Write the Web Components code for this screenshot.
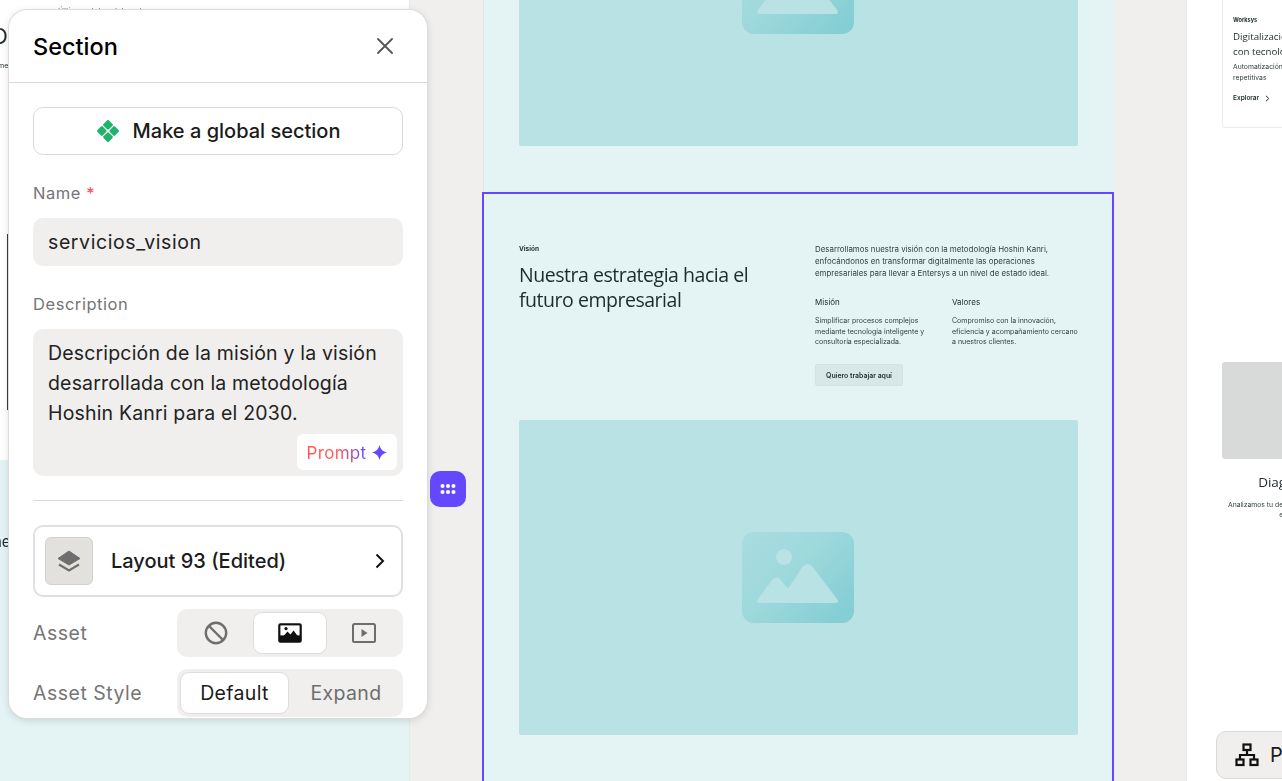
<!DOCTYPE html>
<html lang="es">
<head>
<meta charset="utf-8">
<title>Section</title>
<style>
  html, body { margin: 0; height: 100%; overflow: hidden; background: #f0efed; }
  body { font-family: "Inter", "Liberation Sans", sans-serif; }
</style>
</head>
<body>
<editor-app></editor-app>

<script>
const FONT = `"Inter", "Liberation Sans", sans-serif`;

class ImagePlaceholder extends HTMLElement {
  constructor() {
    super();
    this.attachShadow({ mode: 'open' });
    this.shadowRoot.innerHTML = `
      <style>
        :host { display: flex; flex: none; width: 559px; height: 315px; align-items: center; justify-content: center; background: #b8e2e4; border-radius: 2px; }
        svg { display: block; width: 112px; height: 91px; margin-left: -1px; }
      </style>
      <svg viewBox="0 0 112 91" aria-hidden="true">
        <defs>
          <linearGradient id="g" x1="0" y1="0" x2="1" y2="0.8">
            <stop offset="0" stop-color="#aadcdf"/>
            <stop offset="0.45" stop-color="#9fd9dc"/>
            <stop offset="1" stop-color="#84ced4"/>
          </linearGradient>
        </defs>
        <rect width="112" height="91" rx="12" fill="url(#g)"/>
        <circle cx="42" cy="25" r="8" fill="#b8e2e4"/>
        <path d="M17 69 L32 49 Q34 46 37 49 L44 57 Q46 59 48 57 L62 36 Q66 32 69 36 L94 69 Z" fill="#b8e2e4" stroke="#b8e2e4" stroke-width="4" stroke-linejoin="round"/>
      </svg>
    `;
  }
}

class VisionSection extends HTMLElement {
  constructor() {
    super();
    this.attachShadow({ mode: 'open' });
    this.shadowRoot.innerHTML = `
      <style>
        :host { display: block; box-sizing: border-box; width: 632px; margin: -1px 0 0 -2px; height: 600px; border: 2px solid #6347ff; background: #e4f3f4; padding: 47px 35px 0; color: #1d2b2c; font-family: "Inter", sans-serif; position: relative; }
        .top { display: grid; grid-template-columns: 296px 1fr; height: 179px; filter: blur(0.25px); }
        .tag { font-size: 6.5px; font-weight: 700; line-height: 10px; margin: 3px 0 0; }
        h2 { margin: 8px 0 0; font: 400 19.5px/25px "Open Sans", sans-serif; letter-spacing: -0.47px; }
        .lead { margin: 2px 0 0; font-size: 7.9px; line-height: 12px; color: #334041; white-space: nowrap; }
        .cols { display: grid; grid-template-columns: 137px 1fr; margin-top: 17px; }
        h3 { margin: 0 0 8px; font-size: 8px; line-height: 12px; font-weight: 400; }
        .cols p { margin: 0; font-size: 7px; line-height: 10.6px; color: #334041; white-space: nowrap; }
        button { display: block; margin-top: 16.5px; width: 88px; height: 22px; padding: 0; border: 1px solid #d3e2e3; border-radius: 2px; background: #d8e7e8; font: 600 6.9px "Inter", sans-serif; color: #1d2b2c; }
      </style>
      <div class="top">
        <div>
          <p class="tag">Visión</p>
          <h2>Nuestra estrategia hacia el<br>futuro empresarial</h2>
        </div>
        <div>
          <p class="lead">Desarrollamos nuestra visión con la metodología Hoshin Kanri,<br>enfocándonos en transformar digitalmente las operaciones<br>empresariales para llevar a Entersys a un nivel de estado ideal.</p>
          <div class="cols">
            <div><h3>Misión</h3><p>Simplificar procesos complejos<br>mediante tecnología inteligente y<br>consultoría especializada.</p></div>
            <div><h3>Valores</h3><p>Compromiso con la innovación,<br>eficiencia y acompañamiento cercano<br>a nuestros clientes.</p></div>
          </div>
          <button>Quiero trabajar aquí</button>
        </div>
      </div>
      <image-placeholder></image-placeholder>
    `;
  }
}

class CenterPage extends HTMLElement {
  constructor() {
    super();
    this.attachShadow({ mode: 'open' });
    this.shadowRoot.innerHTML = `
      <style>
        :host { display: block; flex: none; width: 630px; height: 781px; box-shadow: -1px 0 0 #e6e6e4; }
        .prev { box-sizing: border-box; height: 193px; padding: 0 36px 47px 35px; background: #e4f3f4; display: flex; flex-direction: column; justify-content: flex-end; overflow: hidden; }
      </style>
      <div class="prev"><image-placeholder></image-placeholder></div>
      <vision-section></vision-section>
    `;
  }
}

class LeftPage extends HTMLElement {
  constructor() {
    super();
    this.attachShadow({ mode: 'open' });
    this.shadowRoot.innerHTML = `
      <style>
        :host { display: block; position: relative; flex: none; width: 409px; height: 781px; background: #fff; overflow: hidden; box-shadow: 1px 0 0 #e8e8e6; font-family: "Inter", sans-serif; color: #1d2b2c; }
        .mint { height: 321px; margin-top: 460px; background: #e4f3f4; }
        .bit { position: absolute; white-space: nowrap; filter: blur(0.25px); }
        .rule { position: absolute; left: 7px; top: 234px; width: 1px; height: 176px; background: #33403f; }
      </style>
      <div class="mint"></div>
      <span class="bit" style="left:-8px;top:23px;font-size:22px">D</span>
      <span class="bit" style="left:-8px;top:61px;font-size:7px">Inme</span>
      <span class="bit" style="left:58px;top:6px;font-size:8px;color:#666">Últimos datos del sector</span>
      <div class="rule"></div>
      <span class="bit" style="left:-12px;top:532px;font-size:15px">the</span>
    `;
  }
}

class RightPage extends HTMLElement {
  constructor() {
    super();
    this.attachShadow({ mode: 'open' });
    this.shadowRoot.innerHTML = `
      <style>
        :host { display: block; flex: none; box-sizing: border-box; width: 300px; height: 781px; background: #fff; padding-left: 35px; color: #1d2b2c; font-family: "Inter", sans-serif; box-shadow: -1px 0 0 #e8e8e6; }
        .card { box-sizing: border-box; width: 200px; height: 128px; padding-left: 10px; padding-top: 15px; border: 1px solid #eceded; border-top: 0; border-radius: 0 0 3px 3px; filter: blur(0.25px); }
        .tag { margin: 0; font-size: 5.6px; font-weight: 700; line-height: 10px; }
        .title { margin: 5px 0 0; font: 400 9.7px/14.5px "Open Sans", sans-serif; white-space: nowrap; }
        .desc { margin: 3px 0 0; font-size: 6.8px; line-height: 10.5px; white-space: nowrap; color: #334041; }
        .link { margin: 10px 0 0; font-size: 6.5px; font-weight: 600; line-height: 10px; display: flex; align-items: center; gap: 6px; }
        .step { width: 146px; margin-top: 234px; text-align: center; filter: blur(0.25px); }
        .ph { height: 97px; background: #d8d9d9; border-radius: 3px; }
        .name { margin: 14px 0 0; font: 400 13.5px/18px "Open Sans", sans-serif; }
        .text { margin: 9px 0 0; font-size: 6.8px; line-height: 10px; white-space: nowrap; color: #334041; }
      </style>
      <div class="card">
        <p class="tag">Worksys</p>
        <p class="title">Digitalización<br>con tecnología</p>
        <p class="desc">Automatización de tareas<br>repetitivas</p>
        <p class="link">Explorar <svg width="5" height="7" viewBox="0 0 5 7"><path d="M1 .8 3.8 3.5 1 6.2" fill="none" stroke="#1d2b2c" stroke-width="1"/></svg></p>
      </div>
      <div class="step">
        <div class="ph"></div>
        <p class="name">Diagnóstico</p>
        <p class="text">Analizamos tu desempeño y tus procesos<br>en detalle</p>
      </div>
    `;
  }
}

class PanelField extends HTMLElement {
  constructor() {
    super();
    this.attachShadow({ mode: 'open' });
    const required = this.hasAttribute('required') ? '<i>*</i>' : '';
    this.shadowRoot.innerHTML = `
      <style>
        :host { display: block; font-family: ${FONT}; }
        label { display: block; height: 35px; font-size: 16.5px; line-height: 20px; color: #757575; letter-spacing: .55px; }
        i { font-style: normal; color: #f4515c; }
        .box { position: relative; box-sizing: border-box; background: #f0efed; border-radius: 10px; padding: 9px 15px; font-size: 19.5px; line-height: 30px; color: #222; min-height: 48px; letter-spacing: var(--field-spacing, .17px); }
      </style>
      <label>${this.getAttribute('label')} ${required}</label>
      <div class="box"><slot></slot></div>
    `;
  }
}

class SegmentRow extends HTMLElement {
  constructor() {
    super();
    this.attachShadow({ mode: 'open' });
    this.shadowRoot.innerHTML = `
      <style>
        :host { display: flex; align-items: center; justify-content: space-between; height: 48px; font-family: ${FONT}; }
        span { font-size: 19.5px; color: #757575; letter-spacing: .5px; }
        .track { box-sizing: border-box; width: 226px; height: 48px; padding: 3px; display: flex; background: #f0efed; border-radius: 10px; }
      </style>
      <span>${this.getAttribute('label')}</span>
      <div class="track"><slot></slot></div>
    `;
  }
}

class SegmentItem extends HTMLElement {
  constructor() {
    super();
    this.attachShadow({ mode: 'open' });
    this.shadowRoot.innerHTML = `
      <style>
        :host { display: flex; box-sizing: border-box; flex: 1 1 0; align-items: center; justify-content: center; border-radius: 9px; border: 1px solid transparent; font-family: ${FONT}; font-size: 19.5px; letter-spacing: .35px; color: #6e6e6e; }
        :host([active]) { background: #fff; border-color: #dedddb; color: #1b1b1b; }
      </style>
      <slot></slot>
    `;
  }
}

class SectionPanel extends HTMLElement {
  constructor() {
    super();
    this.attachShadow({ mode: 'open' });
    this.shadowRoot.innerHTML = `
      <style>
        :host { position: absolute; left: 9px; top: 10px; box-sizing: border-box; width: 418px; height: 708px; overflow: hidden; background: #fff; border-radius: 18px; box-shadow: 0 0 0 1px #dcdcda, 0 2px 8px rgba(0,0,0,.14); font-family: ${FONT}; color: #1b1b1b; }
        header { box-sizing: border-box; height: 73px; padding: 0 34px 0 24px; display: flex; align-items: center; justify-content: space-between; border-bottom: 1px solid #d9d9d9; }
        h1 { margin: 0; font-size: 23.5px; font-weight: 450; color: #000; }
        .close { display: block; }
        .body { padding: 24px 24px 0; }
        .global { box-sizing: border-box; width: 100%; height: 48px; display: flex; align-items: center; justify-content: center; gap: 13px; background: #fff; border: 1px solid #d9d9d9; border-radius: 10px; font: 450 20px ${FONT}; color: #1b1b1b; padding: 0; }
        panel-field.name { margin-top: 28px; --field-spacing: .6px; }
        panel-field.desc { margin-top: 28px; }
        .prompt { position: absolute; right: 6px; bottom: 6px; width: 100px; height: 36px; padding-top: 1px; box-sizing: border-box; display: flex; align-items: center; justify-content: center; gap: 6px; background: #fff; border-radius: 6px; }
        .prompt b { font-size: 17px; font-weight: 400; line-height: 20px; letter-spacing: .3px; background: linear-gradient(90deg, #ff5a4f 0, #ff5a55 55%, #6448ff 100%); -webkit-background-clip: text; background-clip: text; color: transparent; }
        .ta { min-height: 129px; display: block; }
        hr { margin: 24px 0; border: 0; border-top: 1px solid #d9d9d9; }
        .layout { box-sizing: border-box; height: 72px; padding: 0 15px 0 10px; display: flex; align-items: center; border: 2px solid #e0e0e0; border-radius: 10px; font-size: 20px; font-weight: 450; }
        .thumb { width: 48px; height: 48px; box-sizing: border-box; display: flex; align-items: center; justify-content: center; background: #e2e1dd; border: 1px solid #d2d1cd; border-radius: 6px; margin-right: 18px; }
        .layout span { flex: 1; }
        segment-row { margin-top: 12px; }
        svg { display: block; }
      </style>
      <header>
        <h1>Section</h1>
        <svg class="close" width="16" height="16" viewBox="0 0 16 16"><path d="M1 1 15 15M15 1 1 15" stroke="#555" stroke-width="1.8" stroke-linecap="round"/></svg>
      </header>
      <div class="body">
        <button class="global">
          <svg width="24" height="24" viewBox="0 0 24 24" fill="#1fb36b"><rect x="8.200" y="2" width="7.600" height="7.600" rx="1.200" transform="rotate(45 12 5.800)"/><rect x="8.200" y="14.400" width="7.600" height="7.600" rx="1.200" transform="rotate(45 12 18.200)"/><rect x="2" y="8.200" width="7.600" height="7.600" rx="1.200" transform="rotate(45 5.800 12)"/><rect x="14.400" y="8.200" width="7.600" height="7.600" rx="1.200" transform="rotate(45 18.200 12)"/></svg>
          Make a global section
        </button>
        <panel-field class="name" label="Name" required>servicios_vision</panel-field>
        <panel-field class="desc" label="Description">
          <div class="ta">Descripción de la misión y la visión<br>desarrollada con la metodología<br>Hoshin Kanri para el 2030.</div>
          <div class="prompt"><b>Prompt</b><svg width="15" height="15" viewBox="0 0 14 14"><path d="M7 0C7.800 3.800 10 6.200 14 7 10 7.800 7.800 10.200 7 14 6.200 10.200 4 7.800 0 7 4 6.200 6.200 3.800 7 0Z" fill="#6448ff"/></svg></div>
        </panel-field>
        <hr>
        <div class="layout">
          <div class="thumb">
            <svg width="24" height="24" viewBox="0 0 24 24"><path d="M12 2 23 9.500 12 16 1 9.500Z" fill="#6e6e6e" stroke="#6e6e6e" stroke-linejoin="round"/><path d="M2 15.500 12 21.500 22 15.500" fill="none" stroke="#6e6e6e" stroke-width="2.200"/></svg>
          </div>
          <span>Layout 93 (Edited)</span>
          <svg width="12" height="16" viewBox="0 0 12 16"><path d="M2.500 1.500 9 8 2.500 14.500" fill="none" stroke="#111" stroke-width="2"/></svg>
        </div>
        <segment-row label="Asset">
          <segment-item>
            <svg width="24" height="24" viewBox="0 0 24 24" style="margin-left:-2px"><circle cx="12" cy="12" r="10.200" fill="none" stroke="#6e6e6e" stroke-width="2.400"/><path d="M5 5 19 19" stroke="#6e6e6e" stroke-width="2.400"/></svg>
          </segment-item>
          <segment-item active>
            <svg width="24" height="20" viewBox="0 0 24 20"><rect x="1" y="1" width="22" height="18" rx="1.500" fill="#111" stroke="#111" stroke-width="1.600"/><rect x="2.400" y="2.400" width="19.200" height="10" fill="#fff"/><path d="M2 17 9.500 8.500 12.500 11.500 15.500 7.500 22 16V17Z" fill="#111"/><circle cx="8" cy="5.600" r="1.600" fill="#111"/></svg>
          </segment-item>
          <segment-item>
            <svg width="24" height="20" viewBox="0 0 24 20" style="margin-left:2px"><rect x="1" y="1" width="22" height="18" rx="1.500" fill="none" stroke="#6e6e6e" stroke-width="2"/><path d="M9.500 6 15.500 10 9.500 14Z" fill="#6e6e6e"/></svg>
          </segment-item>
        </segment-row>
        <segment-row label="Asset Style">
          <segment-item active style="flex:0 0 109px">Default</segment-item>
          <segment-item style="padding-left:3px">Expand</segment-item>
        </segment-row>
      </div>
    `;
  }
}

class EditorApp extends HTMLElement {
  constructor() {
    super();
    this.attachShadow({ mode: 'open' });
    this.shadowRoot.innerHTML = `
      <style>
        :host { display: flex; position: relative; width: 1282px; height: 781px; overflow: hidden; background: #f0efed; gap: 75px; font-family: ${FONT}; }
        center-page { margin-right: -2px; }
        .handle { position: absolute; left: 430px; top: 471px; width: 36px; height: 36px; display: flex; align-items: center; justify-content: center; background: #6448ff; border-radius: 10px; }
        .tool { position: absolute; left: 1216px; top: 731px; box-sizing: border-box; width: 120px; height: 48px; display: flex; align-items: center; gap: 11px; padding-left: 18px; background: #f0efed; border: 1px solid #d9d9d7; border-radius: 10px; font-size: 20px; color: #1b1b1b; }
        svg { display: block; }
      </style>
      <left-page></left-page>
      <center-page></center-page>
      <right-page></right-page>
      <section-panel></section-panel>
      <div class="handle">
        <svg width="16" height="12" viewBox="0 0 16 12" fill="#fff"><circle cx="2.500" cy="3" r="2"/><circle cx="8" cy="3" r="2"/><circle cx="13.500" cy="3" r="2"/><circle cx="2.500" cy="9" r="2"/><circle cx="8" cy="9" r="2"/><circle cx="13.500" cy="9" r="2"/></svg>
      </div>
      <div class="tool">
        <svg width="24" height="24" viewBox="0 0 24 24" fill="none" stroke="#111" stroke-width="2.200"><rect x="8.500" y="1.500" width="7" height="5.500"/><rect x="1.500" y="16.500" width="7" height="5.500"/><rect x="15.500" y="16.500" width="7" height="5.500"/><path d="M12 7V12M5 16.500V12H19V16.500"/></svg>
        <span>Pages</span>
      </div>
    `;
  }
}

customElements.define('image-placeholder', ImagePlaceholder);
customElements.define('vision-section', VisionSection);
customElements.define('center-page', CenterPage);
customElements.define('left-page', LeftPage);
customElements.define('right-page', RightPage);
customElements.define('panel-field', PanelField);
customElements.define('segment-row', SegmentRow);
customElements.define('segment-item', SegmentItem);
customElements.define('section-panel', SectionPanel);
customElements.define('editor-app', EditorApp);
</script>
</body>
</html>
